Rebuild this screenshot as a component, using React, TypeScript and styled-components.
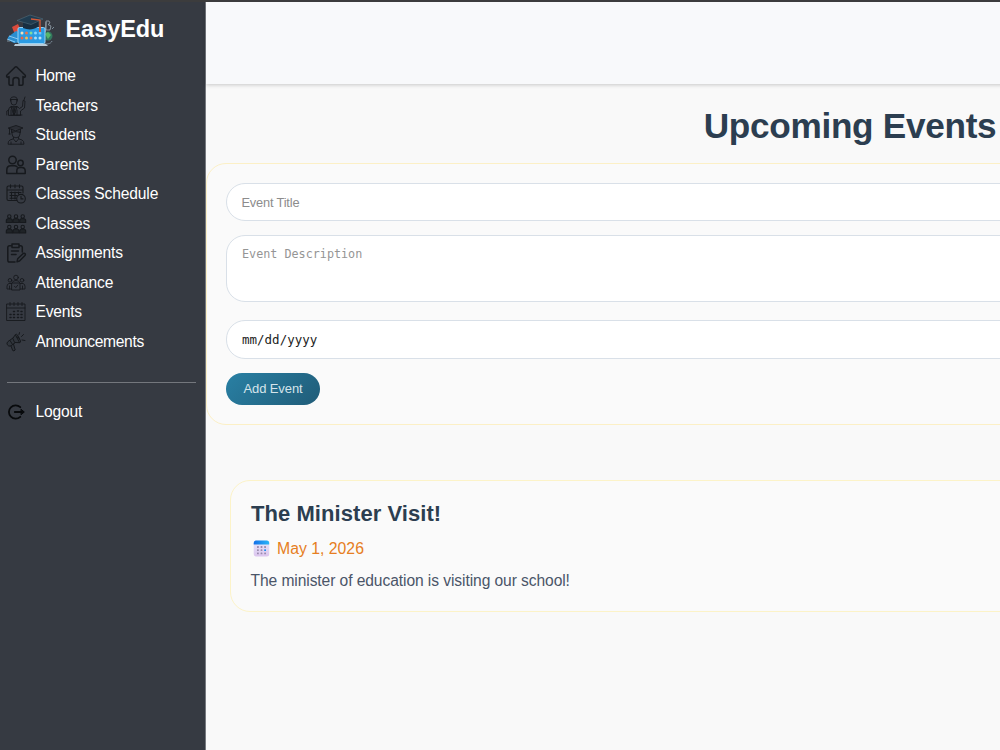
import React from "react";
import styled, { createGlobalStyle } from "styled-components";

const Global = createGlobalStyle`
  * { box-sizing: border-box; }
  html, body { margin: 0; overflow: hidden; background: #f9f9f9; }
  body { font-family: "Liberation Sans", Arial, sans-serif; }
`;

const Page = styled.div`
  display: flex;
  width: 1000px;
  height: 750px;
  overflow: hidden;
  border-top: 2px solid #3c3c3d;
`;

const Sidebar = styled.aside`
  flex: 0 0 206px;
  padding: 10px 9px 0 6px;
  background: #363a42;
  border-right: 1px solid #777a80;
`;

const Brand = styled.div`
  display: flex;
  align-items: center;
  height: 38px;
  gap: 11.5px;
  color: #fff;
`;

const BrandName = styled.span`
  padding-bottom: 4px;
  font-size: 23.5px;
  font-weight: 700;
  line-height: 28px;
  letter-spacing: -0.05px;
`;

const Nav = styled.nav`
  display: flex;
  flex-direction: column;
  padding-top: 11.5px;
`;

const NavItem = styled.a`
  display: flex;
  align-items: center;
  gap: 9.5px;
  height: 29.53px;
  color: #fff;
  font-size: 15.6px;
  line-height: 20px;
  text-decoration: none;
  white-space: nowrap;
`;

const Label = styled.span<{ $track: number }>`
  letter-spacing: ${(p) => p.$track}px;
`;

const Icon = styled.svg`
  flex: none;
  width: 20px;
  height: 20px;
  overflow: visible;
  fill: none;
  stroke: #16191d;
  stroke-width: 1.1;
  stroke-linecap: round;
  stroke-linejoin: round;
`;

const Divider = styled.hr`
  width: 189px;
  height: 1px;
  margin: 25px 0 15px 1px;
  border: 0;
  background: #74777d;
`;

const Main = styled.main`
  flex: 0 0 1288px;
  background: #f9f9f9;
`;

const TopBar = styled.header`
  height: 82px;
  background: #f8f9fb;
  box-shadow: 0 1px 4px rgba(0, 0, 0, 0.2);
`;

const Title = styled.h1`
  margin: 20px 0 16px;
  color: #2c3e50;
  font-size: 35.2px;
  line-height: 43px;
  letter-spacing: -0.3px;
  text-align: center;
`;

const FormCard = styled.form`
  display: flex;
  flex-direction: column;
  align-items: flex-start;
  height: 262px;
  padding: 19px;
  border: 1px solid #fcf0c6;
  border-radius: 20px;
  background: #fafafa;
`;

const Field = styled.div<{ $height: number; $gap: number }>`
  width: 1248px;
  height: ${(p) => p.$height}px;
  margin-bottom: ${(p) => p.$gap}px;
  padding: 9.5px 14.5px;
  border: 1px solid #d9e0e8;
  border-radius: 19px;
  background: #fff;
  color: #8c8c8c;
  font-size: 12.8px;
  line-height: 17px;
  letter-spacing: -0.17px;
`;

const Mono = styled.span<{ $size: number; $dark?: boolean; $shift: number }>`
  display: block;
  margin: ${(p) => p.$shift}px 0 0 0.5px;
  color: ${(p) => (p.$dark ? "#222" : "#959595")};
  font-family: "DejaVu Sans Mono", monospace;
  font-size: ${(p) => p.$size}px;
  letter-spacing: 0;
`;

const AddButton = styled.button`
  width: 94px;
  height: 32px;
  padding: 0 0 1px;
  border: 0;
  border-radius: 16px;
  background: linear-gradient(135deg, #2980a4, #205c78);
  color: #d5e4ea;
  font: 13px "Liberation Sans", Arial, sans-serif;
  letter-spacing: -0.1px;
`;

const EventCard = styled.article`
  width: 1240px;
  height: 132px;
  margin: 55px 0 0 24px;
  padding: 19px 19.5px;
  border: 1px solid #fcf3c8;
  border-radius: 20px;
  background: #fafafa;
`;

const EventName = styled.h2`
  margin: 0 0 8px 0.5px;
  color: #2c3e50;
  font-size: 22px;
  line-height: 27px;
  letter-spacing: 0.06px;
`;

const EventDate = styled.div`
  display: flex;
  align-items: center;
  gap: 6.5px;
  height: 28px;
  color: #e67e22;
  font-size: 15.8px;
  letter-spacing: 0;
`;

const EventText = styled.p`
  margin: 7px 0 0;
  color: #4a5568;
  font-size: 15.6px;
  line-height: 21px;
  letter-spacing: -0.08px;
`;

const Logo = () => (
  <svg width="48" height="36" viewBox="0 0 48 36">
    <path d="M6 14l6-3 5 11-6 5z" fill="#d94a3c" />
    <path d="M2 24l8-6 7 3v8l-9 1-6-3z" fill="#2a8fd0" />
    <path d="M1 26l8 3M3 23l9 3" stroke="#8cc8ef" />
    <path d="M40 8h3l1 2-2 1.500 3 1.500-1 4h-4zM40 9l-1 16" fill="none" stroke="#9aa7b1" strokeWidth=".8" />
    <circle cx="42" cy="23" r="4.5" fill="#32765e" />
    <path d="M39 21l3-2 3 3-3 4z" fill="#55b56b" />
    <path d="M36 30c4 2 9 1 10-2M46 16l2-2M1 28h3" stroke="#7a8b98" fill="none" />
    <rect x="12" y="14.5" width="27" height="16" rx="1.5" fill="#2b9be3" stroke="#97d2f4" />
    <path d="M9 31h31l2 2H8z" fill="#b9cad6" />
    <g>
      {[16, 20.5, 25, 29.5, 34].map((x, i) => (
        <React.Fragment key={x}>
          <circle cx={x} cy="20" r="1.5" fill={["#f1dfbb", "#ec744d", "#80dc9c", "#8cd5fa", "#72c4f5"][i]} />
          <circle cx={x} cy="25" r="1.5" fill={["#e7674a", "#f3ba56", "#ee7958", "#a7defb", "#b8e4f9"][i]} />
        </React.Fragment>
      ))}
    </g>
    <path d="M17 8v7c5 2 10 2 15-1V8z" fill="#182f42" />
    <path d="M11 7.500l13-5.500 13 4-12 5.500z" fill="#203c50" stroke="#5b7685" strokeWidth=".5" />
    <path d="M25 6l9 1v12" fill="none" stroke="#d65a38" strokeWidth="1.3" />
    <path d="M34 14v5" stroke="#d65a38" strokeWidth="2" />
  </svg>
);

const CalendarEmoji = () => (
  <svg width="20" height="20" viewBox="0 0 20 20">
    <defs>
      <linearGradient id="head" x1="0" x2="1">
        <stop stopColor="#1470e8" />
        <stop offset="1" stopColor="#29b6f8" />
      </linearGradient>
      <linearGradient id="sheet" x1="0" y1="0" x2="0" y2="1">
        <stop stopColor="#e6e9fb" />
        <stop offset="1" stopColor="#dcc5ee" />
      </linearGradient>
    </defs>
    <rect x="2.7" y="1.5" width="15.5" height="16" rx="2.5" fill="url(#sheet)" />
    <path d="M2.700 5.500V4Q2.700 1.500 5.200 1.500h10.500q2.500 0 2.500 2.500V5.500z" fill="url(#head)" />
    {[6.9, 10.5, 14.1].map((x) =>
      [8, 11.2, 14.4].map((y) => (
        <rect key={`${x}-${y}`} x={x - 0.9} y={y - 0.9} width="1.8" height="1.8" rx=".5" fill={x > 14 && y > 11 && y < 12 ? "#168df0" : "#9a8bae"} />
      ))
    )}
  </svg>
);

const person = (x: number, y: number) => (
  <g key={`${x}-${y}`}>
    <circle cx={x} cy={y + 2} r="1.7" />
    <path d={`M${x - 3} ${y + 8}v-2q0-2 3-2t3 2v2z`} fill="#16191d" fillOpacity=".7" />
  </g>
);

const drawings: Record<string, React.ReactNode> = {
  Home: <path strokeWidth="1.5" d="M3 10.500L1.800 11.400Q.1 10.800.8 9.300L9 1.200q1-.8 2 0l8.200 8.100q.7 1.500-1 2.100L17 10.500V18q0 1.200-1.200 1.200H13V14q0-2.500-3-2.500T7 14v5.200H4.200Q3 19.200 3 18z" />,
  Teachers: (
    <g strokeWidth=".9">
      <path d="M4.500 5V2.800Q5 .8 8 .8t3.300 2.500V5M4.300 3.500h7" />
      <path d="M5 4v2q0 3 2.900 3t2.900-3V4M2.500 19v-5q0-3 3.500-3.500l2 2 2-2q2 0 3.500 2l3-2 .5-6 2 .5-.5 7-4 3v4zM8 13l-1 4 1 2 1-2z" />
      <path d="M.8 19v-4l2-1M5 14v5M11 14v5M18 4l1-3M6 19h10" />
      <path d="M5 11l3 8 3-8z" fill="#16191d" fillOpacity=".35" />
    </g>
  ),
  Students: (
    <g strokeWidth=".9">
      <path d="M2.500 3L10 .5 17 3l-7 2.700zM5.500 4.500v3q4-1.800 9 0v-3M3.500 3.500V9M2.800 9h1.500" fill="#16191d" fillOpacity=".35" />
      <path d="M6 7v2q0 3.800 4 3.800T14 9V7M7.500 12.500v1.300L4 15q-2 .8-2 4.200h16q0-3.400-2-4.200l-3.500-1.200v-1.300M7.500 14l2.500 3 2.500-3M5 17v2M15 17v2" />
    </g>
  ),
  Parents: (
    <g strokeWidth="1.5">
      <circle cx="6.500" cy="5" r="3.700" />
      <circle cx="14.500" cy="8" r="2.700" />
      <path d="M11 18.500H.8V15q0-4.300 4-4.300h3.700q1.500 0 2.500 1M10.800 18.500V16q0-3.500 3-3.500h2q3.400 0 3.400 3.500v2.500z" />
    </g>
  ),
  "Classes Schedule": (
    <g>
      <path d="M11 16.500H2.500Q1 16.500 1 15V3.500Q1 2 2.500 2h13Q17 2 17 3.500V9M1 6h16M4.500.7v3M9 .7v3M13.500.7v3M4 8.500h11M4 11.500h7M4 14.300h6M5.500 8v7M9 8v7M12.500 8v2" />
      <circle cx="15" cy="14.700" r="4.300" />
      <path d="M15 12.200v2.700h2" />
    </g>
  ),
  Classes: <g>{[0.5, 11].map((y) => [3.3, 10, 16.7].map((x) => person(x, y)))}</g>,
  Assignments: (
    <g strokeWidth="1.5">
      <path d="M6 2.700H3.500Q1.800 2.700 1.800 4.500v12.700q0 1.800 1.700 1.800H9M13 2.700h1.500q1.800 0 1.800 1.800V9M6 1h7v3.500H6zM5.500 8h7M5.500 11.500H10M11 18.800l.7-3 5.500-5.300q1.200-.6 1.900.3.600.8-.2 1.700l-5.400 5.500z" />
    </g>
  ),
  Attendance: (
    <g strokeWidth=".9">
      <circle cx="10" cy="4.500" r="2.300" />
      <circle cx="4" cy="7.300" r="1.800" />
      <circle cx="16" cy="7.300" r="1.800" />
      <path d="M6.300 9.500q.5-2 3.700-2t3.700 2M6 10h8v7H6zM8.500 13.300l1.300 1.300 2-2.500M5.500 10.500H3q-2 .4-2 3V16h4.500M14.500 10.500H17q2 .4 2 3V16h-4.500M3.500 13v3M16.500 13v3" />
    </g>
  ),
  Events: (
    <g strokeWidth=".9">
      <path d="M1 2h18v16.500H1zM1 6h18M4 .5v3M8 .5v3M12 .5v3M16 .5v3" />
      <path d="M7.500 9.500h1M11.500 9h1M15 9.500h1M4 12.500h1M7.500 12.500h1M11.500 12.500h1M15 12.500h1M4 15.500h1M7.500 15.500h1M11.500 15.500h1M15 15.500h1" strokeWidth="1.500" />
    </g>
  ),
  Announcements: (
    <g strokeWidth="1">
      <path d="M7 6l2.500-3.500q1-.7 2 .5l3 6q.4 1.500-1 1.700L9 10.500zM7 6L2 9.500q-1.800 1.500-.7 3.200 1.300 2 3.300 1.300L9.500 10.500M5 14l1.700 4.500q1.200 1 2.500-.5L7.500 12M4 8.500l2.500 4M9.500 3l4 7.500" fill="#16191d" fillOpacity=".15" />
      <path d="M13 2.500L13.500.6M15.500 4.500l2-2M16 8l3 .5M11 5q2.500-.2 2.500 2" />
    </g>
  ),
  Logout: (
    <g transform="translate(.8)" stroke="#080a0c" strokeWidth="1.800">
      <path d="M13.500 5.200A6.700 6.700 0 1 0 13.500 14.800M8 10h8" />
      <path d="M14.500 7.500l3 2.500-3 2.500z" fill="#080a0c" strokeWidth="1" />
    </g>
  ),
};

const links: [string, number][] = [
  ["Home", -0.4],
  ["Teachers", -0.1],
  ["Students", -0.17],
  ["Parents", -0.04],
  ["Classes Schedule", -0.13],
  ["Classes", -0.09],
  ["Assignments", -0.18],
  ["Attendance", -0.11],
  ["Events", -0.22],
  ["Announcements", -0.33],
];

const Item = ({ name, track }: { name: string; track: number }) => (
  <NavItem>
    <Icon viewBox="0 0 20 20">{drawings[name]}</Icon>
    <Label $track={track}>{name}</Label>
  </NavItem>
);

export default function App() {
  return (
    <>
      <Global />
      <Page>
        <Sidebar>
          <Brand>
            <Logo />
            <BrandName>EasyEdu</BrandName>
          </Brand>
          <Nav>
            {links.map(([name, track]) => (
              <Item key={name} name={name} track={track} />
            ))}
            <Divider />
            <Item name="Logout" track={-0.15} />
          </Nav>
        </Sidebar>
        <Main>
          <TopBar />
          <Title>Upcoming Events</Title>
          <FormCard>
            <Field $height={38} $gap={14}>Event Title</Field>
            <Field $height={67} $gap={18}>
              <Mono $size={11.75} $shift={0}>Event Description</Mono>
            </Field>
            <Field $height={39} $gap={14}>
              <Mono $size={12.5} $shift={0.5} $dark>mm/dd/yyyy</Mono>
            </Field>
            <AddButton type="button">Add Event</AddButton>
          </FormCard>
          <EventCard>
            <EventName>The Minister Visit!</EventName>
            <EventDate>
              <CalendarEmoji />
              May 1, 2026
            </EventDate>
            <EventText>The minister of education is visiting our school!</EventText>
          </EventCard>
        </Main>
      </Page>
    </>
  );
}
